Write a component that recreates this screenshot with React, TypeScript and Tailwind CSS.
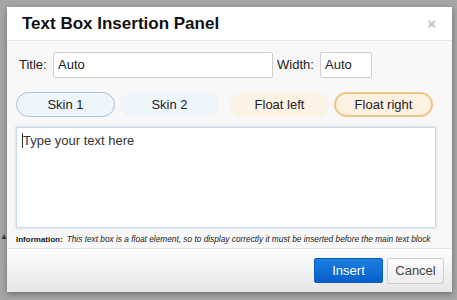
const font = "font-['Liberation_Sans',Arial,sans-serif]";

function PillButton({
  label,
  className,
}: {
  label: string;
  className: string;
}) {
  return (
    <button
      className={`h-[25px] w-[99px] rounded-full text-[13px] text-[#222] ${className}`}
    >
      {label}
    </button>
  );
}

export default function App() {
  return (
    <div
      className={`${font} relative h-[300px] w-[457px] overflow-hidden bg-[#a6a6a6] pl-[7px] pt-[7px]`}
    >
      <div className="absolute left-0 top-[233px] text-[8px] leading-none text-[#333]">
        ▲
      </div>
      <div className="flex h-[285px] w-[445px] flex-col bg-[#f8f8f8] shadow-[0_2px_6px_rgba(0,0,0,0.35)]">
        <div className="flex h-[34px] items-center justify-between border-b border-[#e8e8e8] bg-white pl-[15px] pr-[16px]">
          <h1 className="text-[17px] font-bold text-[#111]">
            Text Box Insertion Panel
          </h1>
          <span className="text-[15px] font-bold leading-none text-[#bdbdbd]">
            ×
          </span>
        </div>

        <div className="flex flex-1 flex-col px-[9px]">
          <div className="mt-[11px] flex items-center text-[13px] text-[#222]">
            <span className="w-[37px] pl-[3px]">Title:</span>
            <div className="flex h-[26px] w-[220px] items-center rounded-[2px] border border-[#cfcfcf] bg-white pl-[4px]">
              Auto
            </div>
            <span className="ml-[4px] w-[43px]">Width:</span>
            <div className="flex h-[26px] w-[52px] items-center rounded-[2px] border border-[#cfcfcf] bg-white pl-[4px]">
              Auto
            </div>
          </div>

          <div className="mt-[14px] flex">
            <PillButton
              label="Skin 1"
              className="border border-[#a9c6db] bg-[#eef5fb]"
            />
            <PillButton
              label="Skin 2"
              className="ml-[5px] border border-[#eef5fb] bg-[#eef5fb]"
            />
            <PillButton
              label="Float left"
              className="ml-[11px] border border-[#fdf3e4] bg-[#fdf3e4]"
            />
            <PillButton
              label="Float right"
              className="ml-[5px] border-2 border-[#efc687] bg-[#fdf1e2]"
            />
          </div>

          <div className="mt-[10px] h-[101px] w-[420px] border border-[#c9dbe9] bg-white px-[5px] pt-[3px] text-[13px] text-[#333] shadow-[0_0_3px_rgba(140,180,210,0.5)]">
            <span className="border-l border-[#333]">Type your text here</span>
          </div>

          <p className="mt-[5px] whitespace-nowrap text-[8px] text-[#222]">
            <span className="font-bold">Information:</span>
            <span className="ml-[4px] text-[8.3px] italic">
              This text box is a float element, so to display correctly it must
              be inserted before the main text block
            </span>
          </p>
        </div>

        <div className="flex h-[44px] items-center justify-end gap-[4px] border-t border-[#e3e3e3] bg-gradient-to-b from-[#fefefe] to-[#e6e6e6] pr-[8px]">
          <button className="h-[25px] w-[69px] rounded-[2px] border border-[#0a5fc4] bg-gradient-to-b from-[#1c7ee0] to-[#0560c9] text-[13px] text-white">
            Insert
          </button>
          <button className="h-[26px] w-[57px] rounded-[2px] border border-[#cfcfcf] bg-gradient-to-b from-[#fdfdfd] to-[#ececec] text-[13px] text-[#444]">
            Cancel
          </button>
        </div>
      </div>
    </div>
  );
}
